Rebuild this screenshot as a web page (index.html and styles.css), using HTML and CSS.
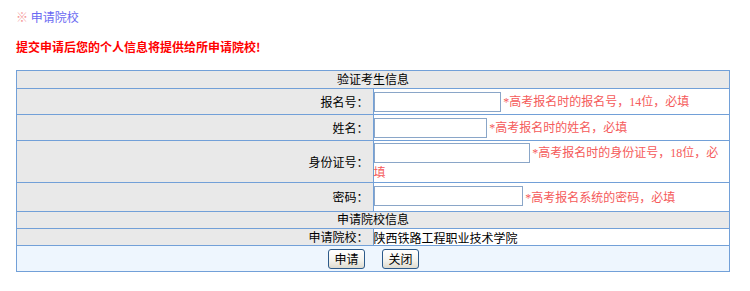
FILE: index.html
```html
<!DOCTYPE html>
<html lang="zh-CN">
<head>
    <meta charset="UTF-8">
    <title>申请院校</title>
    <link rel="stylesheet" href="styles.css">
</head>
<body>
    <!-- Page title -->
    <div class="page-title"><span class="mark">※</span> 申请院校</div>

    <!-- Notice -->
    <div class="notice">提交申请后您的个人信息将提供给所申请院校!</div>

    <table class="apply-table">
        <tr class="row-head">
            <td colspan="2">验证考生信息</td>
        </tr>
        <tr class="row-26">
            <td class="label">报名号：</td>
            <td class="value"><input type="text" class="w127"> <span class="hint">*高考报名时的报名号，14位，必填</span></td>
        </tr>
        <tr class="row-26">
            <td class="label">姓名：</td>
            <td class="value"><input type="text" class="w113"> <span class="hint">*高考报名时的姓名，必填</span></td>
        </tr>
        <tr class="row-42">
            <td class="label">身份证号：</td>
            <td class="value wrap"><input type="text" class="w156"> <span class="hint">*高考报名时的身份证号，18位，必填</span></td>
        </tr>
        <tr class="row-29">
            <td class="label">密码：</td>
            <td class="value low"><input type="password" class="w149"> <span class="hint">*高考报名系统的密码，必填</span></td>
        </tr>
        <tr class="row-head row-17">
            <td colspan="2">申请院校信息</td>
        </tr>
        <tr class="row-17">
            <td class="label">申请院校：</td>
            <td class="value plain">陕西铁路工程职业技术学院</td>
        </tr>
        <tr class="row-actions">
            <td colspan="2">
                <div class="actions">
                    <button type="button" class="btn">申请</button>
                    <button type="button" class="btn">关闭</button>
                </div>
            </td>
        </tr>
    </table>
</body>
</html>
```

FILE: styles.css
```css
* {
    box-sizing: border-box;
}

body {
    margin: 0;
    padding: 8px 0 0 16px;
    font-family: "Liberation Serif", "Noto Sans CJK SC", serif;
    font-size: 12px;
    color: #000;
    background: #fff;
}

/* Title */
.page-title {
    height: 18px;
    line-height: 18px;
    color: #6a6af2;
    font-family: "Noto Sans CJK SC", sans-serif;
}

.page-title .mark {
    color: #f59a9a;
}

.notice {
    margin-top: 12px;
    height: 18px;
    line-height: 18px;
    color: #f00;
    font-weight: bold;
    font-family: "Noto Sans CJK SC", sans-serif;
}

/* Form table */
.apply-table {
    margin-top: 14px;
    width: 714px;
    border-collapse: collapse;
    table-layout: fixed;
}

.apply-table td {
    border: 1px solid #72a0d8;
    padding: 0;
    line-height: 16px;
}

.row-head td {
    background: #e9e9e9;
    text-align: center;
    height: 18px;
}

.row-26 td { height: 26px; }
.row-42 td { height: 42px; }
.row-29 td { height: 29px; }
.row-17 td { height: 17px; }

.label {
    width: 356px;
    background: #e9e9e9;
    text-align: right;
    padding-right: 4px !important;
    font-family: "Noto Sans CJK SC", sans-serif;
}

.value {
    background: #fff;
    font-family: "Noto Sans CJK SC", sans-serif;
}

.value.wrap {
    padding-top: 1px !important;
}

.value.low {
    vertical-align: bottom;
    padding-bottom: 5px !important;
}

.value.low .hint {
    vertical-align: -3px;
}

.value.plain {
    line-height: 15px;
}

.value input {
    height: 20px;
    border: 1px solid #8aa6c8;
    padding: 0 2px;
    margin: 0;
    vertical-align: middle;
    font-size: 12px;
}

.w127 { width: 127px; }
.w113 { width: 113px; }
.w156 { width: 156px; }
.w149 { width: 149px; }

.hint {
    color: #f55a5a;
    font-family: "Liberation Serif", "Noto Sans CJK SC", serif;
    vertical-align: middle;
}

/* Action buttons */
.row-actions td {
    height: 26px;
    background: #eef6fe;
}

.actions {
    display: flex;
    justify-content: center;
    gap: 17px;
    padding-left: 1px;
}

.btn {
    width: 37px;
    height: 20px;
    padding: 0;
    border: 1px solid #2c5a8a;
    border-radius: 3px;
    background: linear-gradient(180deg, #ffffff 0%, #f3f2ec 60%, #dedbcf 100%);
    font-family: "Noto Sans CJK SC", sans-serif;
    font-size: 12px;
    line-height: 18px;
    color: #000;
}
```
